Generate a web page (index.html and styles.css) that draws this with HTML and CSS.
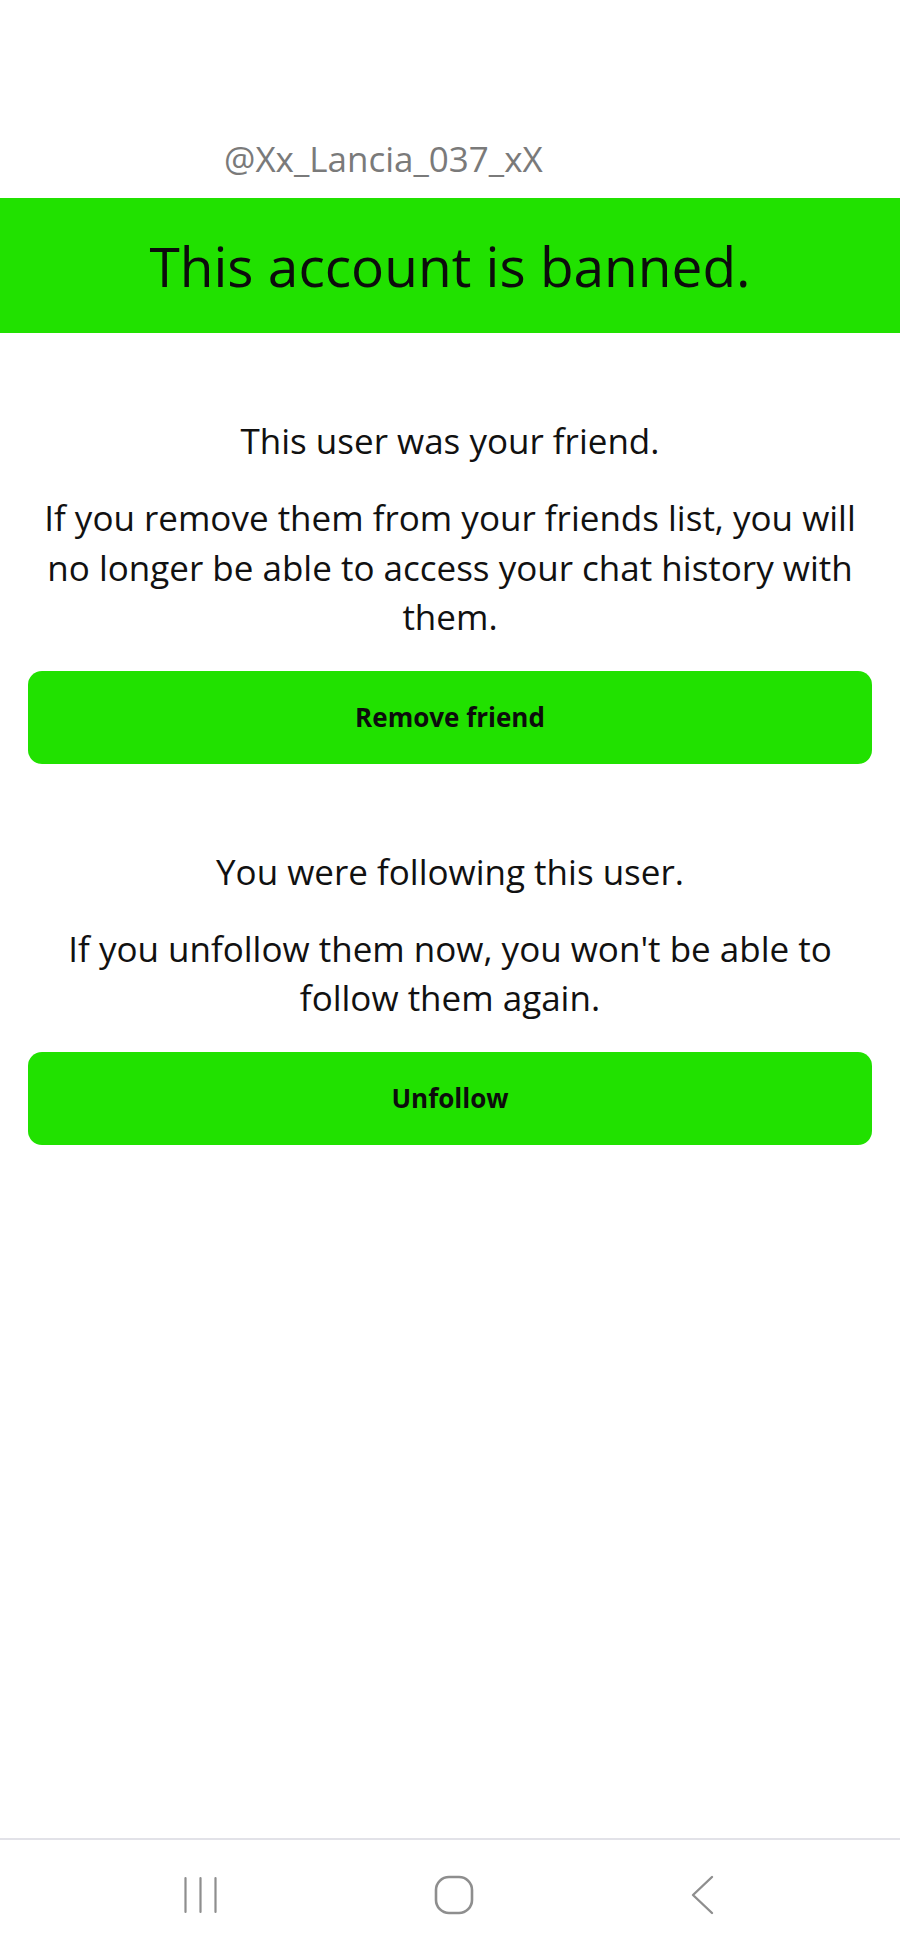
FILE: index.html
```html
<!DOCTYPE html>
<html>

<head>
    <meta charset="utf-8" />
    <meta name="viewport" content="width=device-width, initial-scale=1.0">
    <title>Banned account</title>
    <link rel="stylesheet" href="styles.css">
</head>

<body>
    <div class="screen">
        <div class="profile-head">
            <span class="handle">@Xx_Lancia_037_xX</span>
        </div>

        <div class="banned-bar">This account is banned.</div>

        <div class="content">
            <section class="block">
                <p class="block-title">This user was your friend.</p>
                <p class="block-text">If you remove them from your friends list, you will no longer be able to access your chat history with them.</p>
                <button class="action-btn" type="button">Remove friend</button>
            </section>

            <section class="block">
                <p class="block-title">You were following this user.</p>
                <p class="block-text">If you unfollow them now, you won't be able to follow them again.</p>
                <button class="action-btn" type="button">Unfollow</button>
            </section>
        </div>

        <!-- barre de navigation Android -->
        <nav class="nav-bar">
            <svg class="nav-icon" width="34" height="38" viewBox="0 0 34 38">
                <path d="M1.5 2v34M16.5 2v34M31.5 2v34" stroke="#8e8e8e" stroke-width="2.2" stroke-linecap="round" fill="none" />
            </svg>
            <svg class="nav-icon" width="40" height="40" viewBox="0 0 40 40">
                <rect x="2" y="2" width="36" height="36" rx="13" stroke="#8e8e8e" stroke-width="2.6" fill="none" />
            </svg>
            <svg class="nav-icon" width="26" height="40" viewBox="0 0 26 40">
                <path d="M22 2L3 20L22 38" stroke="#8e8e8e" stroke-width="2.4" stroke-linecap="round" stroke-linejoin="round" fill="none" />
            </svg>
        </nav>
    </div>
</body>

</html>
```

FILE: styles.css
```css
/* Trang chính */
body {
    margin: 0;
    background-color: #fff;
    font-family: "Open Sans", "Noto Sans", sans-serif;
    color: #111;
}

.screen {
    min-height: 1950px;
    display: flex;
    flex-direction: column;
}

/* Tên người dùng */
.profile-head {
    height: 198px;
    padding-left: 224px;
    box-sizing: border-box;
    padding-top: 139px;
}

.handle {
    font-size: 35px;
    line-height: 40px;
    color: #7a7a7a;
}

/* Thanh thông báo bị cấm */
.banned-bar {
    height: 135px;
    background-color: #21e100;
    display: flex;
    align-items: center;
    justify-content: center;
    font-size: 55px;
    color: #0c0c0c;
}

.content {
    padding: 83px 28px 0;
}

.block {
    display: flex;
    flex-direction: column;
    align-items: center;
    text-align: center;
    margin-bottom: 83px;
}

.block-title {
    margin: 0 0 27px;
    font-size: 35px;
    line-height: 50px;
}

.block-text {
    margin: 0 0 29px;
    padding: 0 12px;
    font-size: 35px;
    line-height: 49.5px;
}

/* Nút xanh */
.action-btn {
    width: 100%;
    height: 93px;
    background-color: #21e100;
    color: #0c0c0c;
    border: none;
    border-radius: 14px;
    font-family: "Open Sans", "Noto Sans", sans-serif;
    font-weight: bold;
    font-size: 26px;
    cursor: pointer;
}

.nav-bar {
    margin-top: auto;
    height: 112px;
    border-top: 2px solid #e2e2e8;
    box-sizing: border-box;
    display: flex;
    align-items: center;
    justify-content: space-between;
    padding: 0 184px 0 184px;
}

.nav-icon {
    display: block;
}
```
